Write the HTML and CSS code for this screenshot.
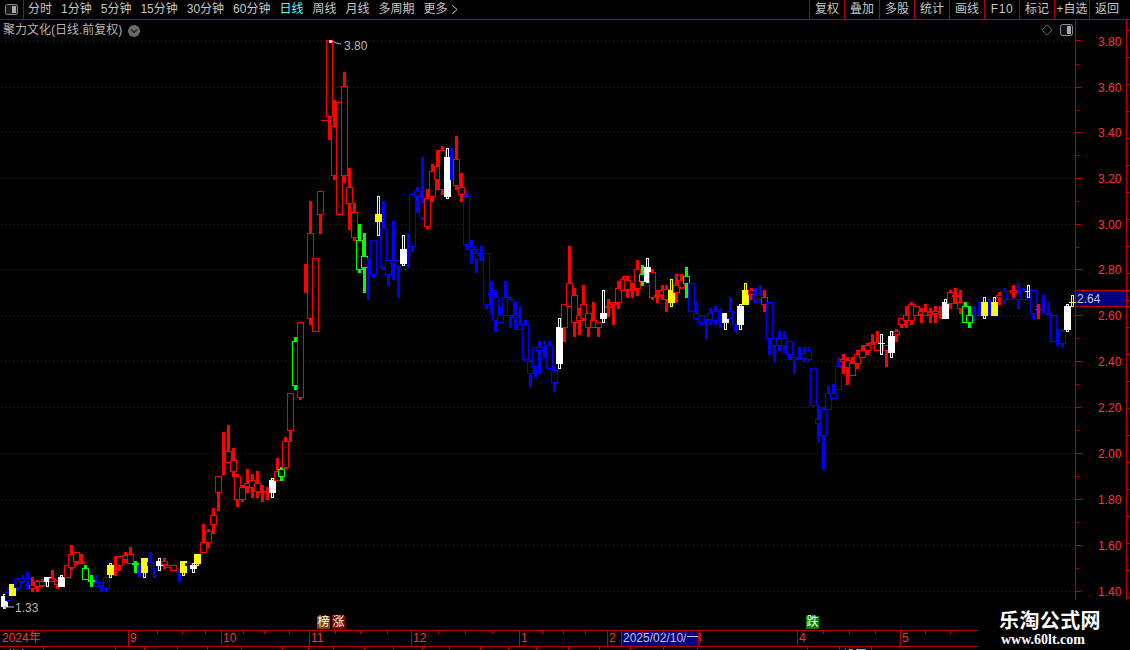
FILE: index.html
```html
<!DOCTYPE html>
<html lang="zh-CN">
<head>
<meta charset="utf-8">
<title>聚力文化 日线</title>
<link rel="stylesheet" href="styles.css">
</head>
<body>
<div class="app">
  <header class="toolbar">
    <div class="panel-toggle">
      <svg class="panel-icon" width="13" height="11" viewBox="0 0 13 11"><rect x=".5" y=".5" width="12" height="10" rx="2" fill="#1c1c1c" stroke="#8a8a8a"/><rect x="7" y="2" width="4" height="7" fill="#a8a8a8"/></svg>
    </div>
    <nav class="periods">
      <span>分时</span><span>1分钟</span><span>5分钟</span><span>15分钟</span><span>30分钟</span><span>60分钟</span><span class="active">日线</span><span>周线</span><span>月线</span><span>多周期</span>
      <span class="more">更多<svg width="6" height="9" viewBox="0 0 6 9"><path d="M.5.5 5 4.5.5 8.5" fill="none" stroke="#c8c8c8"/></svg></span>
    </nav>
    <nav class="actions">
      <span>复权</span><span>叠加</span><span>多股</span><span>统计</span><span>画线</span><span class="f10">F10</span><span>标记</span><span>+自选</span><span>返回</span>
    </nav>
  </header>

  <main class="chart-area">
    <svg id="chart" class="chart" width="1130" height="610" viewBox="0 20 1130 610"></svg>
    <div class="stock-title">
      <span>聚力文化(日线.前复权)</span>
      <svg width="12" height="12" viewBox="0 0 12 12"><circle cx="6" cy="6" r="6" fill="#6a6a6a"/><path d="M3 4.5 6 7.5 9 4.5" fill="none" stroke="#222" stroke-width="1.4"/></svg>
    </div>
    <div class="chart-tools">
      <svg width="12" height="12" viewBox="0 0 12 12"><path d="M6 .8 11.2 6 6 11.2.8 6Z" fill="none" stroke="#6c6c6c"/></svg>
      <svg width="13" height="12" viewBox="0 0 13 12"><rect x=".5" y=".5" width="12" height="11" rx="2" fill="#111" stroke="#8a8a8a"/><rect x="7" y="2" width="4" height="8" fill="#a8a8a8"/></svg>
    </div>
    <span class="flag flag-bang">榜</span>
    <span class="flag flag-zhang">涨</span>
    <span class="flag flag-die">跌</span>
  </main>

  <div class="time-axis">
    <span class="month" style="width:128px">2024年</span>
    <span class="month" style="width:93px">9</span>
    <span class="month" style="width:88px">10</span>
    <span class="month" style="width:102px">11</span>
    <span class="month" style="width:108px">12</span>
    <span class="month" style="width:88px">1</span>
    <span class="month" style="width:14px">2</span>
    <span class="date-cursor" style="width:78px">2025/02/10/一</span>
    <span class="month month-hidden" style="width:98px">3</span>
    <span class="month" style="width:103px">4</span>
    <span class="month" style="width:78px">5</span>
    <svg id="axisTicks" class="axis-ticks" width="978" height="4"></svg>
  </div>
  <div class="sub-tabs">
    <svg id="subTicks" class="sub-ticks" width="978" height="4"></svg>
    <span class="sub-a">指标</span><span class="sub-b">设置</span>
  </div>

  <aside class="watermark">
    <strong>乐淘公式网</strong>
    <b>www.60lt.com</b>
  </aside>
</div>
<script src="chart.js"></script>
</body>
</html>
```
FILE: styles.css
```css
* { box-sizing: border-box; }
html, body { margin: 0; padding: 0; background: #000; }
body {
  width: 1130px;
  height: 650px;
  overflow: hidden;
  font-family: "Liberation Sans", "Noto Sans CJK SC", sans-serif;
  font-size: 12px;
  color: #c8c8c8;
}
.app { position: relative; display: flex; flex-direction: column; width: 1130px; height: 650px; overflow: hidden; }

.toolbar {
  display: flex;
  align-items: stretch;
  height: 20px;
  flex: none;
  border-bottom: 1px solid #b00000;
}
.panel-toggle {
  width: 24px;
  border-right: 1px solid #b00000;
  display: flex;
  align-items: center;
  padding-left: 5px;
}
.periods {
  display: flex;
  align-items: center;
  gap: 9px;
  padding-left: 4px;
  flex: 1;
  line-height: 19px;
}
.periods .active { color: #54ffff; }
.more { display: inline-flex; align-items: center; gap: 4px; }
.actions { display: flex; margin-right: 6px; }
.actions span {
  width: 35px;
  text-align: center;
  line-height: 19px;
  border-left: 1px solid #b00000;
  white-space: nowrap;
}
.actions .f10 { letter-spacing: .6px; }

.chart-area { position: relative; height: 610px; flex: none; }
.chart { display: block; }
.chart text { font-family: "Liberation Sans", sans-serif; font-size: 12px; }
.price-label { fill: #ff3232; }
.extreme-label { fill: #b8b8b8; }
.current-label { fill: #c8c8c8; }

.stock-title {
  position: absolute;
  left: 3px;
  top: 2px;
  display: flex;
  align-items: center;
  gap: 6px;
  line-height: 17px;
  color: #b4b4b4;
}
.chart-tools {
  position: absolute;
  left: 1041px;
  top: 4px;
  display: flex;
  align-items: center;
  gap: 7px;
}
.flag {
  position: absolute;
  top: 596px;
  width: 13px;
  height: 13px;
  line-height: 13px;
  font-size: 12px;
  text-align: center;
  color: #fff;
}
.flag-bang { left: 317px; background: #804000; }
.flag-zhang { left: 332px; background: #800000; }
.flag-die { left: 806px; background: #008000; }

.time-axis {
  position: relative;
  display: flex;
  width: 978px;
  height: 17px;
  flex: none;
  border-top: 1px solid #c00000;
  border-bottom: 1px solid #c00000;
  color: #ff3232;
}
.month {
  border-left: 1px solid #c00000;
  padding-left: 1px;
  line-height: 15px;
  white-space: nowrap;
  overflow: hidden;
}
.month:first-child { border-left: 0; padding-left: 2px; }
.month-hidden { border-left: 0; padding-left: 0; text-indent: -4px; }
.date-cursor {
  background: #000080;
  border-left: 1px solid #c00000;
  border-right: 1px solid #c00000;
  color: #c8c8c8;
  line-height: 15px;
  padding-left: 1px;
  white-space: nowrap;
  overflow: hidden;
}
.axis-ticks { position: absolute; left: 0; top: 0; }

.sub-tabs { position: relative; height: 3px; flex: none; width: 978px; overflow: hidden; }
.sub-ticks { position: absolute; left: 0; top: 0; }
.sub-tabs span { position: absolute; top: 2px; line-height: 14px; color: #c8c8c8; }
.sub-a { left: 8px; }
.sub-tabs .sub-b { left: 843px; color: #54ffff; }

.watermark {
  position: absolute;
  left: 978px;
  top: 600px;
  width: 152px;
  height: 50px;
  background: #000;
  display: flex;
  flex-direction: column;
  align-items: flex-start;
  padding: 9px 0 0 21px;
  color: #fff;
}
.watermark strong {
  font-family: "Noto Sans CJK SC", sans-serif;
  font-size: 20px;
  font-weight: 700;
  line-height: 22px;
  letter-spacing: .4px;
}
.watermark b {
  font-family: "Liberation Serif", serif;
  font-size: 14px;
  line-height: 17px;
  margin-left: 2px;
}
```
FILE: chart.js
```js
var NS = 'http://www.w3.org/2000/svg';
var COLORS = { r: '#ff0000', b: '#0000ff', g: '#00ff00', w: '#ffffff', y: '#ffff00' };
var AXIS = '#c00000';

// colour, wick x, high y, low y, body top y, body bottom y (screen pixels)
var CANDLES = [
['w',3,594,609,596,607],['b',7,587,602,592,601],['y',11,584,596,584,596],['b',16,578,590,579,588],['b',21,575,583,578,582],
['b',26,572,589,578,582],['r',31,577,592,585,589],['r',36,580,592,581,587],['r',41,579,587,581,586],['w',46,577,587,577,582],
['r',51,570,580,578,582],['r',56,580,589,580,585],['w',60,575,587,577,587],['r',66,568,578,565,578],['r',70,545,570,554,568],
['r',75,562,565,552,562],['r',80,554,563,562,564],['g',84,565,580,568,580],['g',90,575,587,580,582],['b',95,575,585,582,587],
['b',100,582,592,582,586],['b',105,587,592,577,589],['y',109,563,578,565,575],['r',114,556,576],['r',118,566,571,556,566],
['r',124,552,563,555,560],['r',129,547,554,554,564],['g',134,561,573,563,565],['b',138,566,577],['y',143,558,578,558,573],
['b',149,552,566,562,566],['b',153,566,578,565,569],['w',158,558,571,561,566],['r',163,558,569,561,565],['r',167,565,568,565,568],
['r',172,565,571,565,571],['b',178,569,582],['y',182,561,576,561,573],['b',187,561,571,563,566],['w',192,563,573,565,569],
['y',196,554,566,554,564],['r',202,524,542,542,553],['r',207,529,548,531,543],['r',212,508,534,515,525],['r',217,493,511,476,493],
['r',222,432,475],['r',227,425,451,451,463],['r',232,448,477,460,472],['r',236,474,507,476,500],['r',241,485,502,487,500],
['r',246,469,493,483,487],['r',251,474,498,480,488],['r',256,471,498,483,492],['r',261,485,502,491,493],['r',266,487,500],
['w',271,478,498,480,493],['r',276,458,480,471,481],['g',280,467,481,469,477],['r',284,437,470,441,468],['r',289,431,442,393,431],
['g',294,337,390,341,386],['r',299,322,400,322,398],['r',304,264,293],['r',309,201,325,233,319],['r',314,258,332,258,332],
['r',319,215,234,191,215],['r',328,117,140,40,117],['r',333,100,180,126,176],['r',338,102,215,102,215],['r',343,72,183,86,176],
['r',348,168,230,187,204],['r',353,203,241,212,238],['g',358,224,273,240,270],['g',363,233,293,256,268],['b',367,258,300],
['b',372,240,277,240,275],['y',377,196,236,214,222],['b',382,201,270,228,268],['b',387,260,286,260,275],['b',392,221,280,260,264],
['b',397,260,298,260,267],['w',402,235,266,249,264],['b',407,233,268],['b',411,194,252,194,247],['b',416,187,213,191,197],
['b',421,157,220,202,218],['r',426,189,229,198,227],['r',431,164,202,171,197],['r',436,150,190,166,180],['r',441,146,195,150,190],
['w',446,148,199,157,197],['b',450,148,180],['r',455,136,190,159,186],['r',460,173,202,187,195],['b',465,190,250,196,245],
['b',470,240,264,246,250],['b',475,249,273,253,260],['b',480,246,261,254,256],['b',485,253,309,253,305],['b',490,281,314,292,295],
['b',494,290,332,297,321],['b',499,306,323,315,323],['b',504,281,316,297,316],['b',509,297,328,299,316],['b',514,302,330,315,318],
['b',519,306,330,324,330],['b',524,320,361,324,360],['b',529,360,387,361,374],['b',534,347,378,347,367],['b',538,341,374,347,351],
['b',543,341,358],['b',548,341,370,345,369],['b',553,366,392,370,383],['w',558,318,369,327,364],['r',563,305,342,304,328],
['r',568,246,307,283,307],['r',573,288,337,295,323],['r',578,308,335,315,321],['r',582,285,321,304,319],['r',587,313,337,313,328],
['r',592,302,328,320,328],['r',597,322,337,322,328],['w',602,290,323,313,319],['r',607,299,317,306,308],['r',612,302,325,302,305],
['r',617,281,309,288,303],['r',622,276,291,279,291],['r',626,276,298,280,290],['r',631,283,298,289,291],['r',636,260,296,269,289],
['g',641,265,286,274,282],['w',646,258,283,267,282],['r',651,269,300,272,298],['r',656,290,303,295,297],['r',661,285,300,290,295],
['r',665,285,312,289,300],['y',670,279,307,290,303],['r',675,274,303,285,293],['r',680,274,289,280,288],['g',685,267,298,276,284],
['b',690,283,312,283,312],['b',695,302,320,313,319],['b',700,315,325,315,323],['b',705,319,339,319,321],['b',709,308,325,313,320],
['b',714,306,325,311,321],['b',719,308,328],['w',724,313,330,313,323],['b',729,297,319,311,319],['b',734,312,332,312,325],
['w',739,304,330,306,325],['y',744,283,305,290,305],['r',750,288,300,290,295],['b',754,288,303,295,300],['b',759,285,303,295,300],
['r',763,290,312,297,305],['b',768,302,355,302,339],['b',773,338,362,338,346],['b',778,331,351,338,346],['b',783,331,353,338,346],
['b',788,341,360,341,355],['b',793,357,374,357,360],['b',798,347,360,357,359],['b',803,347,362,353,359],['b',807,347,362,350,360],
['b',812,368,406,368,406],['b',817,405,442,419,424],['b',822,407,470,409,436],['b',827,386,410,393,410],['b',832,384,399,393,399],
['b',837,357,390,366,390],['r',842,354,374,359,362],['r',846,357,385,360,368],['r',851,357,376,363,376],['r',856,350,369,354,364],
['r',861,345,358,350,358],['r',866,343,355,345,351],['r',871,334,345,342,344],['r',876,331,351,342,351],['w',880,334,355,343,344],
['r',885,345,367,345,351],['w',890,331,358,336,353],['r',895,329,342,331,335],['r',900,318,328,318,325],['r',905,306,328,315,321],
['r',910,302,325,304,321],['r',915,306,316,306,316],['r',920,308,323,311,315],['r',924,304,316,311,316],['r',929,308,323,312,315],
['r',934,306,323,311,314],['r',939,306,319],['w',944,299,319,302,319],['r',949,290,309,292,304],['r',954,288,304,295,297],
['r',959,290,314,302,309],['g',964,302,323,306,323],['g',968,306,328,315,323],['b',973,306,321],['b',978,302,316],
['y',983,297,319,302,316],['b',988,299,316],['y',993,297,316,302,316],['r',998,292,305,295,298],['b',1003,288,303,291,300],
['b',1008,291,300,291,300],['r',1012,285,298,290,293],['b',1017,283,309,293,300],['b',1022,288,300,290,300],['w',1027,285,298,291,292],
['b',1032,290,319,290,314],['r',1037,304,319,309,310],['b',1042,295,313],['b',1047,302,313,313,315],['b',1052,315,342,315,342],
['b',1056,329,346],['b',1061,329,348,331,344],['w',1066,304,332,306,330],['y',1071,295,307,302,303]
];

var GRID_Y = [41,87,132,178,224,269,315,361,407,453,499,545,591];
var PRICES = ['3.80','3.60','3.40','3.20','3.00','2.80','2.60','2.40','2.20','2.00','1.80','1.60','1.40'];

function el(parent, name, attrs, text) {
  var node = document.createElementNS(NS, name);
  for (var k in attrs) node.setAttribute(k, attrs[k]);
  if (text) node.textContent = text;
  parent.appendChild(node);
  return node;
}
function rect(p, x, y, w, h, fill) {
  return el(p, 'rect', { x: x, y: y, width: w, height: h, fill: fill, 'shape-rendering': 'crispEdges' });
}
function outline(p, x, y, w, h, color) {
  return el(p, 'rect', { x: x + 0.5, y: y + 0.5, width: w - 1, height: h - 1, fill: '#000', stroke: color, 'shape-rendering': 'crispEdges' });
}

var svg = document.getElementById('chart');

GRID_Y.forEach(function (y, i) {
  el(svg, 'line', { x1: 1, x2: 1075, y1: y + 0.5, y2: y + 0.5, stroke: '#8a0000', 'stroke-dasharray': '1 3', 'shape-rendering': 'crispEdges' });
  if (i > 0) rect(svg, 1076, y, 5, 1, AXIS);
  el(svg, 'text', { x: 1098, y: y + 4.5, 'class': 'price-label' }, PRICES[i]);
  if (i < GRID_Y.length - 1) rect(svg, 1076, Math.round((y + GRID_Y[i + 1]) / 2), 3, 1, AXIS);
});
rect(svg, 1076, 40, 5, 1, AXIS);

rect(svg, 1075, 20, 1, 580, AXIS);
rect(svg, 1126, 20, 1, 580, AXIS);
for (var ty = 30; ty < 600; ty += 27) rect(svg, 1127, ty, 3, 1, '#a00000');

CANDLES.forEach(function (c) {
  var color = COLORS[c[0]], x = c[1], hi = c[2], lo = c[3], top = c[4], bot = c[5];
  var filled = c[0] === 'w' || c[0] === 'y';
  if (filled) {
    outline(svg, x, hi, 3, lo - hi, color);
  } else {
    rect(svg, x, hi, 3, lo - hi, color);
  }
  if (top === undefined) return;
  if (bot - top <= 1) {
    rect(svg, x - 2, top, 7, 1, color);
  } else if (filled) {
    rect(svg, x - 2, top, 7, bot - top, color);
  } else {
    outline(svg, x - 2, top, 7, bot - top, color);
  }
});

rect(svg, 321, 120, 7, 1, COLORS.r);
rect(svg, 329, 40, 3, 3, '#ffb0b0');
el(svg, 'path', { d: 'M332 41 336 43 341 44', fill: 'none', stroke: '#b8b8b8' });
el(svg, 'text', { x: 344, y: 50, 'class': 'extreme-label' }, '3.80');
el(svg, 'path', { d: 'M14 607H4L6 605M4 607 6 609', fill: 'none', stroke: '#b8b8b8' });
el(svg, 'text', { x: 15, y: 612, 'class': 'extreme-label' }, '1.33');

rect(svg, 1076, 291, 50, 16, '#000080');
rect(svg, 1075, 290, 55, 1, AXIS);
rect(svg, 1075, 306, 55, 1, AXIS);
el(svg, 'text', { x: 1077, y: 303, 'class': 'current-label' }, '2.64');

function ticks(id, xs, h) {
  var t = document.getElementById(id);
  xs.forEach(function (x) { rect(t, x, 0, 1, h, AXIS); });
}
ticks('axisTicks', [157,182,205,243,264,289,335,360,387,438,465,492,542,563,585,642,663,685,823,849,875,925,950], 3);
ticks('subTicks', [43,115,144,177,207,241,282,308,333,364,393,422,449,480,508,536,568,599,630,663,697,807,839,871], 4);
```
